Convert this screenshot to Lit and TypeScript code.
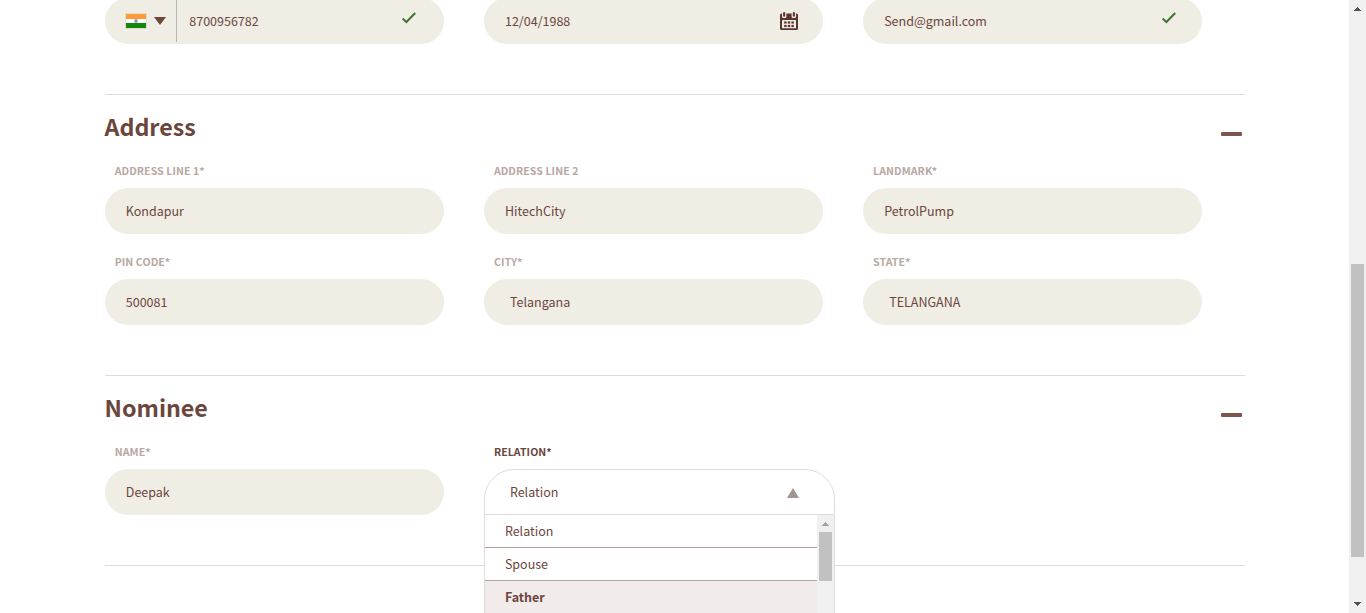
import { LitElement, html, svg, css, nothing } from "lit";
import { customElement, property } from "lit/decorators.js";

const check = html`<svg class="check" width="16" height="14" viewBox="0 0 16 14">
  <path d="M1.6 7.4 5.4 11 14.2 2" fill="none" stroke="#41752f" stroke-width="2" />
</svg>`;

const calendar = html`<svg class="calendar" width="18" height="18" viewBox="0 0 18 18">
  <path d="M1.500 1.500h15A1.500 1.500 0 0 1 18 3V16.500A1.500 1.500 0 0 1 16.500 18h-15A1.500 1.500 0 0 1 0 16.500V3A1.500 1.500 0 0 1 1.500 1.500z" fill="#5a352d" />
  <rect x="2" y="8" width="14" height="8.300" rx=".6" fill="#f0ede4" />
  <rect x="2" y="0" width="4.400" height="5.900" rx="1.500" fill="#f0ede4" />
  <rect x="11.600" y="0" width="4.400" height="5.900" rx="1.500" fill="#f0ede4" />
  <rect x="3.100" y="0" width="2.100" height="4.800" rx="1" fill="#5a352d" />
  <rect x="12.800" y="0" width="2.100" height="4.800" rx="1" fill="#5a352d" />
  ${[9.4, 12.9].map((y) => [4.2, 7.8, 11.4].map((x) => svg`<rect x=${x} y=${y} width="2.400" height="2.200" fill="#5a352d" />`))}
</svg>`;

const flag = html`<svg class="flag" width="22" height="16" viewBox="0 0 22 16">
  <rect width="22" height="16" fill="#dfdcd8" />
  <rect x="1" y="1" width="20" height="5" fill="#ff9933" />
  <rect x="1" y="6" width="20" height="4" fill="#fff" />
  <rect x="1" y="10" width="20" height="5" fill="#138808" />
  <circle cx="11" cy="8" r="1.900" fill="#8d9ccb" />
</svg>`;

@customElement("form-field")
class FormField extends LitElement {
  @property() label = "";
  @property() value = "";
  @property() kind = "input";
  @property() icon = "";

  static styles = css`
    :host { display: block; position: relative; }
    .label { display: block; height: 17px; line-height: 17px; margin: 0 0 9px 9.700px; font-size: 10.600px; font-weight: 700; letter-spacing: 0.060px; color: #b9a7a3; white-space: pre; }
    .pill { width: 339px; height: 46px; box-sizing: border-box; border-radius: 23px; background: #f0ede4; display: flex; align-items: center; padding: 0 25px 0 20.800px; }
    .pill.select { padding-left: 25.800px; }
    .pill.phone { padding-left: 20px; }
    .pill.email { padding-right: 23px; }
    .value { flex: 1; line-height: 20px; }
    .check { margin: -6px 2px 0 0; }
    .divider { width: 1px; height: 44px; margin: -2px 12.300px 0 10px; background: #b9b7b2; }
    .caret { margin-left: 7px; }
  `;

  render() {
    return html`
      ${this.label ? html`<span class="label">${this.label}</span>` : nothing}
      <div class="pill ${this.kind}">
        ${this.kind === "phone"
          ? html`${flag}<svg class="caret" width="12" height="8" viewBox="0 0 12 8"><path d="M0 0h12L6 8z" fill="#6b463d" /></svg><i class="divider"></i>`
          : nothing}
        <span class="value">${this.value}</span>
        ${this.icon === "check" ? check : this.icon === "calendar" ? calendar : nothing}
      </div>
    `;
  }
}

@customElement("relation-select")
class RelationSelect extends LitElement {
  static styles = css`
    :host { display: block; position: relative; }
    .label { display: block; height: 17px; line-height: 17px; margin: 0 0 9px 9.700px; font-size: 10.600px; font-weight: 700; letter-spacing: 0.060px; }
    .head { width: 351px; height: 46px; box-sizing: border-box; border: 1px solid #e0dbda; border-radius: 30px 30px 0 0; background: #fff; display: flex; align-items: center; justify-content: space-between; padding: 0 35px 0 24.700px; line-height: 20px; }
    .arrow { display: block; margin-top: 2px; }
    .menu { position: absolute; z-index: 2; top: 72px; left: 0; width: 351px; height: 180px; box-sizing: border-box; border: 0 solid #e0dbda; border-width: 0 1px; background: #fff; display: flex; }
    .options { flex: 1; }
    .option { height: 33px; box-sizing: border-box; border-bottom: 1px solid #b5a09b; padding-left: 19.700px; line-height: 32px; }
    .option.hover { background: #f1eceb; font-weight: 700; }
    .bar { width: 17px; background: #f0f0f0; display: flex; flex-direction: column; align-items: center; padding-top: 7px; box-sizing: border-box; }
    .thumb { width: 13px; height: 49px; margin-top: 6px; background: #c1c1c1; }
  `;

  render() {
    return html`
      <span class="label">RELATION*</span>
      <div class="head">
        <span>Relation</span>
        <svg class="arrow" width="12" height="10" viewBox="0 0 12 10"><path d="M6 0l6 10H0z" fill="#a39490" /></svg>
      </div>
      <div class="menu">
        <div class="options">
          ${["Relation", "Spouse", "Father"].map((o) => html`<div class="option ${o === "Father" ? "hover" : ""}">${o}</div>`)}
        </div>
        <div class="bar">
          <svg width="7" height="4" viewBox="0 0 7 4" shape-rendering="crispEdges"><path d="M3 0h1v1h1v1h1v1h1v1H0V3h1V2h1V1h1z" fill="#a3a3a3" /></svg>
          <div class="thumb"></div>
        </div>
      </div>
    `;
  }
}

@customElement("app-root")
class AppRoot extends LitElement {
  static styles = css`
    :host { display: flex; height: 613px; overflow: hidden; background: #fff; color: #6b463d; font-family: "Noto Sans CJK SC", "Noto Sans", sans-serif; font-size: 12.500px; letter-spacing: 0; }
    .page { flex: 1; padding-left: 105px; overflow: hidden; }
    .form { width: 1140px; }
    .section { padding-bottom: 50px; border-bottom: 1px solid #e0dbda; }
    .first { margin-top: -2px; }
    .title { display: flex; justify-content: space-between; align-items: center; height: 67px; box-sizing: border-box; padding: 0 3px 3px 0; }
    h2 { margin: 0 0 2px -0.500px; font-size: 23.250px; line-height: 32px; font-weight: 700; }
    .minus { width: 21px; height: 4px; border-radius: 1px; background: #7a564d; margin-top: 14px; }
    .grid { display: grid; grid-template-columns: repeat(3, 339px); gap: 19px 40.200px; }
    .scroll { width: 17px; background: #f0f0f0; display: flex; flex-direction: column; align-items: center; justify-content: space-between; padding: 7px 0; box-sizing: border-box; }
    .track { flex: 1; padding-top: 253px; }
    .thumb { width: 13px; height: 293px; background: #c1c1c1; }
  `;

  render() {
    return html`
      <div class="page">
        <div class="form">
          <div class="section first">
            <div class="grid">
              <form-field kind="phone" value="8700956782" icon="check"></form-field>
              <form-field value="12/04/1988" icon="calendar"></form-field>
              <form-field kind="email" value="Send@gmail.com" icon="check"></form-field>
            </div>
          </div>
          <div class="section">
            <div class="title"><h2>Address</h2><span class="minus"></span></div>
            <div class="grid">
              <form-field label="ADDRESS LINE 1*" value="Kondapur"></form-field>
              <form-field label="ADDRESS LINE 2" value="HitechCity"></form-field>
              <form-field label="LANDMARK*" value="PetrolPump"></form-field>
              <form-field label="PIN CODE*" value="500081"></form-field>
              <form-field label="CITY*" kind="select" value="Telangana"></form-field>
              <form-field label="STATE*" kind="select" value="TELANGANA"></form-field>
            </div>
          </div>
          <div class="section">
            <div class="title"><h2>Nominee</h2><span class="minus"></span></div>
            <div class="grid">
              <form-field label="NAME*" value="Deepak"></form-field>
              <relation-select></relation-select>
            </div>
          </div>
        </div>
      </div>
      <div class="scroll">
        <svg width="7" height="4" viewBox="0 0 7 4" shape-rendering="crispEdges"><path d="M3 0h1v1h1v1h1v1h1v1H0V3h1V2h1V1h1z" fill="#505050" /></svg>
        <div class="track"><div class="thumb"></div></div>
        <svg width="7" height="4" viewBox="0 0 7 4" shape-rendering="crispEdges"><path d="M0 0h7v1H6v1H5v1H4v1H3V3H2V2H1V1H0z" fill="#505050" /></svg>
      </div>
    `;
  }
}
